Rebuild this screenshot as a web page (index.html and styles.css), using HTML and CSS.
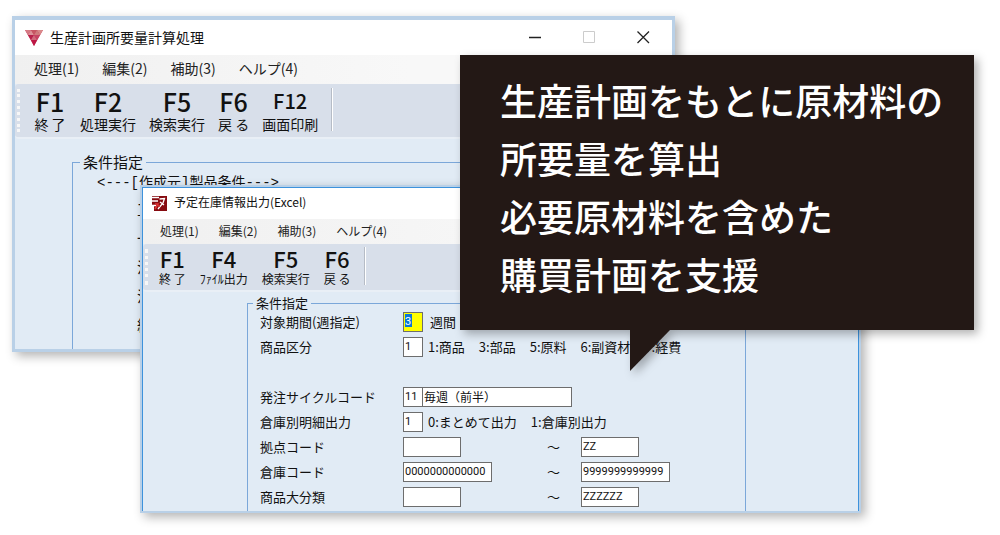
FILE: index.html
```html
<!DOCTYPE html>
<html lang="ja">
<head>
<meta charset="utf-8">
<title>生産計画所要量計算処理</title>
<link rel="stylesheet" href="styles.css">
</head>
<body>
<main class="stage">
  <section class="window window-plan">
    <header class="titlebar">
      <svg class="logo-plan" viewBox="0 0 18 16" aria-hidden="true">
        <path d="M0 0H18L9 16Z" fill="#c8375a"/>
        <path d="M0 0H6L3 5Z" fill="#d57a84"/>
        <path d="M6 0L9 5H3Z" fill="#dc9299"/>
        <path d="M6 0H12L9 5Z" fill="#c65663"/>
        <path d="M12 0H18L15 5Z" fill="#d98a8a"/>
        <path d="M12 0L15 5H9Z" fill="#cf7b7d"/>
        <path d="M3 5H9L6 10Z" fill="#b8204b"/>
        <path d="M9 5L12 10H6Z" fill="#cf6a7c"/>
        <path d="M9 5H15L12 10Z" fill="#c64363"/>
        <path d="M6 10H12L9 16Z" fill="#bd1745"/>
      </svg>
      <h1 class="title">生産計画所要量計算処理</h1>
      <div class="controls">
        <button class="control" aria-label="最小化"><svg viewBox="0 0 13 13"><path d="M0 6.5H12" stroke="#222" stroke-width="1.5"/></svg></button>
        <button class="control" aria-label="最大化"><svg viewBox="0 0 13 13"><path d="M.5 .5H11.5V11.5H.5Z" fill="none" stroke="#ccc"/></svg></button>
        <button class="control" aria-label="閉じる"><svg viewBox="0 0 13 13"><path d="M.5 .5L12 12M12 .5L.5 12" stroke="#222" stroke-width="1.3"/></svg></button>
      </div>
    </header>
    <nav class="menu">
      <button>処理(1)</button><button>編集(2)</button><button>補助(3)</button><button>ヘルプ(4)</button>
    </nav>
    <div class="toolbar">
      <button class="tool"><b>F1</b><span>終 了</span></button>
      <button class="tool"><b>F2</b><span>処理実行</span></button>
      <button class="tool"><b>F5</b><span>検索実行</span></button>
      <button class="tool"><b>F6</b><span>戻 る</span></button>
      <button class="tool"><b class="narrow">F12</b><span>画面印刷</span></button>
    </div>
    <div class="body">
      <fieldset class="group">
        <legend>条件指定</legend>
        <p class="heading">&lt;---[作成元]製品条件---&gt;</p>
        <ul class="terms"><li>工</li><li>一</li><li>注</li><li>注</li><li>経</li></ul>
      </fieldset>
    </div>
  </section>

  <section class="window window-stock">
    <header class="titlebar">
      <svg class="logo-stock" viewBox="0 0 15 15" aria-hidden="true">
        <path d="M0 0H15V15H0Z" fill="#860b10"/>
        <path d="M0 1.5H7M0 5H6M0 9.500H4" stroke="#fff" stroke-width="1.3"/>
        <path d="M0 9H2V15H0Z" fill="#fff"/>
        <path d="M7.500 3L12.500 2.500L11 7L6 13M8 6L12 9" fill="none" stroke="#fff" stroke-width="1.3"/>
        <path d="M3 8H6L3 13M6 10H8" fill="none" stroke="#df3334" stroke-width="1.6"/>
      </svg>
      <h2 class="title">予定在庫情報出力(Excel)</h2>
    </header>
    <nav class="menu">
      <button>処理(1)</button><button>編集(2)</button><button>補助(3)</button><button>ヘルプ(4)</button>
    </nav>
    <div class="toolbar">
      <button class="tool"><b>F1</b><span>終 了</span></button>
      <button class="tool"><b>F4</b><span>ﾌｧｲﾙ出力</span></button>
      <button class="tool"><b>F5</b><span>検索実行</span></button>
      <button class="tool"><b>F6</b><span>戻 る</span></button>
    </div>
    <form class="body">
      <fieldset class="group">
        <legend>条件指定</legend>
        <div class="row">
          <label for="period">対象期間(週指定)</label>
          <div class="entry"><input id="period" class="box tiny current" value="3"><span class="unit">週間</span></div>
        </div>
        <div class="row">
          <label for="kind">商品区分</label>
          <div class="entry"><input id="kind" class="box tiny" value="1">
            <div class="options"><span>1:商品</span><span>3:部品</span><span>5:原料</span><span>6:副資材</span><span>7:経費</span></div></div>
        </div>
        <div class="row spaced">
          <label for="cycle">発注サイクルコード</label>
          <div class="entry"><input id="cycle" class="box tiny" value="11"><input class="box name" aria-label="発注サイクル名" value="毎週（前半）"></div>
        </div>
        <div class="row">
          <label for="detail">倉庫別明細出力</label>
          <div class="entry"><input id="detail" class="box tiny" value="1">
            <div class="options"><span>0:まとめて出力</span><span>1:倉庫別出力</span></div></div>
        </div>
        <div class="row range">
          <label for="base">拠点コード</label>
          <input id="base" class="box short"><span>～</span><input class="box short" aria-label="拠点コード 終了" value="ZZ">
        </div>
        <div class="row range">
          <label for="store">倉庫コード</label>
          <input id="store" class="box code" value="0000000000000"><span>～</span><input class="box code" aria-label="倉庫コード 終了" value="9999999999999">
        </div>
        <div class="row range">
          <label for="class">商品大分類</label>
          <input id="class" class="box short"><span>～</span><input class="box short" aria-label="商品大分類 終了" value="ZZZZZZ">
        </div>
      </fieldset>
    </form>
  </section>

  <aside class="callout">
    <p>生産計画をもとに原材料の<br>所要量を算出<br>必要原材料を含めた<br>購買計画を支援</p>
    <svg class="tail" viewBox="0 0 40 41" aria-hidden="true"><path d="M0 0H40L0 41Z" fill="#231815"/></svg>
  </aside>
</main>
</body>
</html>
```
FILE: styles.css
```css
* { box-sizing: border-box; }
body { margin: 0; background: #fff; color: #111; font-family: "Noto Sans CJK JP", sans-serif; }
button { border: 0; padding: 0; background: none; color: inherit; font: inherit; white-space: nowrap; }
h1, h2, p, ul { margin: 0; padding: 0; font-weight: 400; list-style: none; }

.stage { position: relative; min-height: 535px; overflow: hidden; }

.window {
  position: absolute;
  border: 3px solid #b9d0e7;
  background: #e1ebf5;
  box-shadow: 4px 4px 10px rgba(0, 0, 0, .3);
}
.titlebar { display: flex; align-items: center; background: #fff; }
.title { flex: 1; padding-bottom: 2px; line-height: 20px; white-space: nowrap; }
.controls { display: flex; gap: 41px; }
.control { display: flex; }
.control svg { width: 13px; height: 13px; }
.menu { display: flex; background: linear-gradient(90deg, #f0f0f0, #f8f8f8 60%); color: #222; }
.toolbar {
  position: relative;
  display: flex;
  width: 100%;
  background: #d8dfea;
  border-bottom: 2px solid #e9eff6;
  border-radius: 4px;
}
.toolbar::before {
  content: "";
  position: absolute;
  left: 2px;
  top: 5px;
  bottom: 5px;
  border-left: 3px dotted #f7f7f7;
}
.toolbar::after { content: ""; align-self: stretch; border-left: 1px solid #b6bcc6; border-right: 1px solid #fff; }
.tool { display: flex; flex-direction: column; align-items: center; }
.tool b { font-weight: 500; }
.group { margin: 0; min-width: 0; border: 1px solid #7ba7d9; border-bottom: 0; }

.window-plan { left: 1.2%; top: 16px; width: 66.3%; border-top-width: 4px; }
.window-plan .titlebar { padding: 0 22px 0 10px; height: 35px; gap: 7px; }
.logo-plan { width: 18px; height: 16px; }
.window-plan .title, .window-plan .menu { font-size: 14px; }
.window-plan .menu { gap: 23px; padding: 0 19px 3px; height: 29px; }
.window-plan .toolbar { height: 55px; padding: 4px 0 6px 18px; gap: 13px; font-size: 14px; }
.window-plan .tool:first-child { min-width: 34px; }
.window-plan .tool b { font-size: 25px; line-height: 26px; }
.window-plan .tool .narrow { font-size: 20px; }
.window-plan .tool span { line-height: 20px; }
.window-plan .body { padding: 13px 12px 0 57px; }
.window-plan .group { height: 197px; padding: 0 24px; font-size: 15px; }
.window-plan legend { margin-left: -17px; padding: 0 3px; line-height: 20px; }
.heading { font-family: "Liberation Mono", "Noto Sans CJK JP", monospace; font-size: 14px; line-height: 22px; }
.terms { padding: 0 40px; }
.terms li { line-height: 29px; }

.window-stock { left: 14%; top: 185px; width: 72.1%; border-width: 2px 3px; }
.window-stock::after {
  content: "";
  position: absolute;
  inset: 0 -1px 0 -1px;
  border: 1px solid #3d92dc;
  border-bottom: 0;
  pointer-events: none;
}
.window-stock .titlebar { padding: 0 9px; height: 32px; gap: 7px; }
.logo-stock { width: 15px; height: 15px; }
.window-stock .title, .window-stock .menu { font-size: 12px; }
.window-stock .menu { gap: 20px; padding: 0 17px 2px; height: 25px; }
.window-stock .toolbar { height: 48px; padding: 3px 0 5px 16px; gap: 14px; font-size: 12px; }
.window-stock .tool b { font-size: 22px; line-height: 23px; }
.window-stock .tool span { line-height: 17px; }
.window-stock .body { padding: 3px 112px 0 104px; font-size: 13px; }
.window-stock .group { padding: 1px 0 4px 12px; }
.window-stock legend { margin-left: -7px; padding: 0 3px; line-height: 16px; }
.row { display: grid; grid-template-columns: 143px 1fr; align-items: center; min-height: 20px; margin-bottom: 5px; line-height: 20px; white-space: nowrap; }
.row:last-child { margin-bottom: 0; }
.spaced { margin-top: 30px; }
.range { grid-template-columns: 143px 144px 34px auto; justify-content: start; }
.entry { display: flex; align-items: center; }
.unit { margin-left: 7px; }
.options { display: flex; gap: 14px; margin-left: 5px; }
.box {
  height: 20px;
  padding: 0 1px 2px;
  border: 1px solid #6d6d6d;
  border-radius: 0;
  background: #fff;
  color: #111;
  font: 11px/16px Roboto, "Noto Sans CJK JP", sans-serif;
}
.tiny { width: 20px; }
.short { width: 58px; }
.code { width: 89px; }
.name { width: 150px; margin-left: -1px; font: 12px/16px "Noto Sans CJK JP", sans-serif; }
.current { background: linear-gradient(#0b78d7, #0b78d7) 1px 1px / 7px 13px no-repeat #ff0; color: #fff; }

.callout {
  position: absolute;
  left: 46%;
  top: 55px;
  width: 51.4%;
  padding: 16px 0 27px 40px;
  background: #231815;
  color: #fff;
  font-size: 37px;
  font-weight: 500;
  line-height: 58px;
  white-space: nowrap;
  filter: drop-shadow(4px 4px 5px rgba(0, 0, 0, .3));
}
.callout p { font-weight: 500; }
.tail { position: absolute; left: 33%; top: 100%; width: 40px; height: 41px; }
```
